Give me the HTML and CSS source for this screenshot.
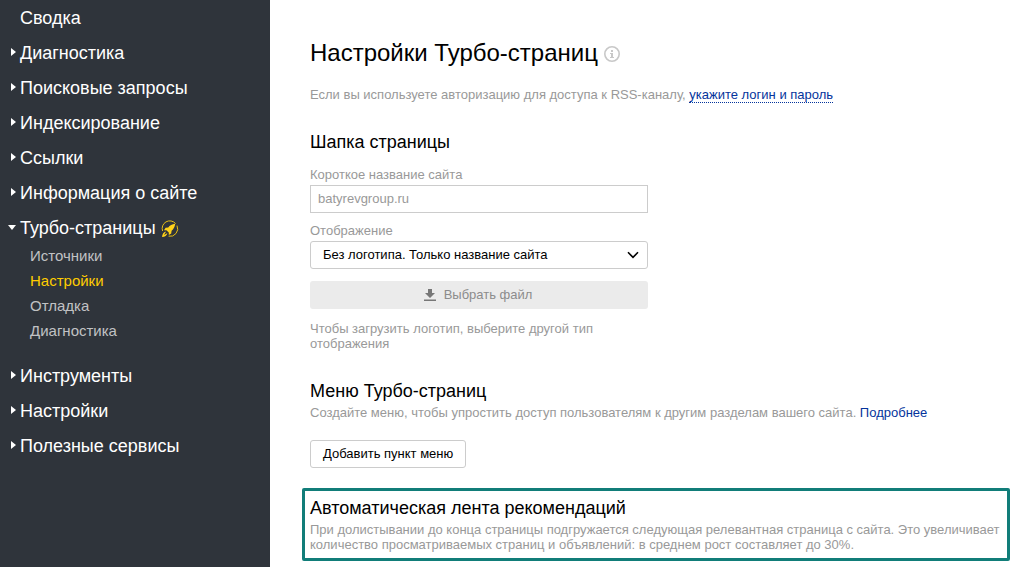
FILE: index.html
```
<!DOCTYPE html>
<html lang="ru">
<head>
<meta charset="utf-8">
<meta name="viewport" content="width=device-width, initial-scale=1">
<title>Настройки Турбо-страниц</title>
<link rel="stylesheet" href="styles.css">
</head>
<body>
<div class="layout">
  <nav class="sidebar" aria-label="Разделы">
    <ul class="menu">
      <li><a class="menu-item" href="#"><span class="marker"></span>Сводка</a></li>
      <li><a class="menu-item" href="#"><span class="marker marker-closed"></span>Диагностика</a></li>
      <li><a class="menu-item" href="#"><span class="marker marker-closed"></span>Поисковые запросы</a></li>
      <li><a class="menu-item" href="#"><span class="marker marker-closed"></span>Индексирование</a></li>
      <li><a class="menu-item" href="#"><span class="marker marker-closed"></span>Ссылки</a></li>
      <li><a class="menu-item" href="#"><span class="marker marker-closed"></span>Информация о сайте</a></li>
      <li>
        <a class="menu-item" href="#"><span class="marker marker-open"></span>Турбо-страницы
          <svg class="rocket" viewBox="0 0 18 18" aria-hidden="true">
            <path d="M1.6 11A7.6 7.6 0 0 1 14.6 3.6M16 5.6A7.6 7.6 0 0 1 7.6 16.2" fill="none" stroke="#e6be14" stroke-width="1"/>
            <path d="M14.2 3.8C11 4.2 8.8 5.4 7.2 7.4L4.6 7.8L3 10.2L5.4 10.2L7.8 12.6L7.8 15L10.2 13.4L10.6 10.8C12.6 9.2 13.8 7 14.2 3.8Z" fill="#ffd21a"/>
            <path d="M4.6 11.6C2.6 12.2 1.4 14 1 17C4 16.6 5.8 15.4 6.4 13.4L5.6 13.4L3.6 14.8L3.2 14.4L4.6 12.4Z" fill="#ffd21a"/>
          </svg>
        </a>
        <ul class="submenu">
          <li><a class="submenu-item" href="#">Источники</a></li>
          <li><a class="submenu-item submenu-item-current" href="#" aria-current="page">Настройки</a></li>
          <li><a class="submenu-item" href="#">Отладка</a></li>
          <li><a class="submenu-item" href="#">Диагностика</a></li>
        </ul>
      </li>
      <li><a class="menu-item" href="#"><span class="marker marker-closed"></span>Инструменты</a></li>
      <li><a class="menu-item" href="#"><span class="marker marker-closed"></span>Настройки</a></li>
      <li><a class="menu-item" href="#"><span class="marker marker-closed"></span>Полезные сервисы</a></li>
    </ul>
  </nav>

  <main class="content">
    <header class="page-head">
      <h1 class="title">Настройки Турбо-страниц</h1>
      <svg class="info" viewBox="0 0 16 16" aria-hidden="true">
        <circle cx="8" cy="8" r="7.2" fill="none" stroke="#c8c8c8" stroke-width="1.6"/>
        <path d="M7 4h2v2H7zM6 7h3v4h1v1H6v-1h1V8H6z" fill="#c8c8c8"/>
      </svg>
    </header>
    <p class="text intro">Если вы используете авторизацию для доступа к RSS-каналу, <a class="link link-dotted" href="#">укажите логин и пароль</a></p>

    <section class="section">
      <h2 class="subtitle">Шапка страницы</h2>
      <form class="form">
        <div class="field">
          <label class="text" for="site-name">Короткое название сайта</label>
          <input class="control input" id="site-name" type="text" value="batyrevgroup.ru">
        </div>
        <div class="field">
          <label class="text" for="display">Отображение</label>
          <div class="select-wrap">
            <select class="control select" id="display">
              <option>Без логотипа. Только название сайта</option>
            </select>
            <svg class="chevron" viewBox="0 0 12 8" aria-hidden="true"><path d="M1 1.3L6 6.3L11 1.3" fill="none" stroke="#000" stroke-width="1.6"/></svg>
          </div>
        </div>
        <button class="file-button" type="button" disabled>
          <svg class="download" viewBox="0 0 12 12" aria-hidden="true"><path d="M4 0h4v4h3L6 9L1 4h3zM0 10.5h12V12H0z" fill="#777"/></svg>
          Выбрать файл
        </button>
        <p class="text hint">Чтобы загрузить логотип, выберите другой тип отображения</p>
      </form>
    </section>

    <section class="section">
      <h2 class="subtitle">Меню Турбо-страниц</h2>
      <p class="text section-text">Создайте меню, чтобы упростить доступ пользователям к другим разделам вашего сайта. <a class="link" href="#">Подробнее</a></p>
      <button class="control add-button" type="button">Добавить пункт меню</button>
    </section>

    <section class="highlight">
      <h2 class="subtitle">Автоматическая лента рекомендаций</h2>
      <p class="text section-text">При долистывании до конца страницы подгружается следующая релевантная страница с сайта. Это увеличивает количество просматриваемых страниц и объявлений: в среднем рост составляет до 30%.</p>
    </section>
  </main>
</div>
</body>
</html>
```
FILE: styles.css
```
* {
  box-sizing: border-box;
}

body {
  margin: 0;
  background: #fff;
  color: #000;
  font-family: "Liberation Sans", Arial, sans-serif;
  font-size: 13px;
  line-height: 15px;
}

h1, h2, p, ul {
  margin: 0;
  padding: 0;
  font-weight: normal;
}

ul {
  list-style: none;
}

.layout {
  display: flex;
  min-height: 100vh;
}

.sidebar {
  flex: 0 0 270px;
  background: #2f343b;
}

.menu-item {
  display: flex;
  align-items: center;
  padding: 5px 8px 3px;
  color: #fff;
  font-size: 18px;
  line-height: 27px;
  text-decoration: none;
}

.marker {
  display: flex;
  width: 12px;
  padding-bottom: 3px;
}

.marker::before {
  border: 4px solid transparent;
}

.marker-closed::before {
  content: "";
  margin-left: 3px;
  border-left-color: #fff;
  border-left-width: 5px;
  border-right-width: 0;
}

.marker-open::before {
  content: "";
  border-top-color: #fff;
  border-top-width: 5px;
  border-bottom-width: 0;
}

.rocket {
  width: 18px;
  height: 18px;
  margin-left: 5px;
}

.submenu {
  margin: -2px 0 15px;
}

.submenu-item {
  display: block;
  padding-left: 30px;
  color: #c1c2c4;
  font-size: 15px;
  line-height: 25px;
  text-decoration: none;
}

.submenu-item-current {
  color: #ffcc00;
}

.content {
  flex: 1;
  min-width: 0;
  padding: 39px 9px 6px 40px;
}

.page-head {
  display: flex;
  align-items: center;
  gap: 6px;
}

.title {
  font-size: 24px;
  line-height: 28px;
}

.info {
  width: 16px;
  height: 16px;
  margin-top: 2px;
}

.text {
  color: #999;
}

.intro {
  margin-top: 20px;
}

.link {
  color: #04349c;
  text-decoration: none;
}

.link-dotted {
  border-bottom: 1px dotted #04349c;
}

.section {
  margin-top: 29px;
}

.subtitle {
  font-size: 18px;
  line-height: 22px;
}

.section-text {
  margin-top: 3px;
}

.form {
  max-width: 338px;
  margin-top: 14px;
}

.field {
  display: flex;
  flex-direction: column;
  gap: 3px;
  margin-bottom: 10px;
}

.control {
  height: 28px;
  border: 1px solid #ccc;
  background: #fff;
  color: #000;
  font: inherit;
}

.input {
  width: 100%;
  padding: 0 7px 2px;
  color: #999;
}

.select-wrap {
  display: grid;
  align-items: center;
}

.select {
  grid-area: 1 / 1;
  width: 100%;
  padding: 0 32px 2px 12px;
  border-radius: 3px;
  appearance: none;
}

.chevron {
  grid-area: 1 / 1;
  justify-self: end;
  width: 12px;
  height: 8px;
  margin-right: 9px;
  pointer-events: none;
}

.file-button {
  display: flex;
  align-items: center;
  justify-content: center;
  gap: 8px;
  width: 100%;
  height: 28px;
  margin: 12px 0;
  padding: 0 8px 2px 6px;
  border: 0;
  border-radius: 3px;
  background: #ebebeb;
  color: #8c8c8c;
  font: inherit;
}

.download {
  width: 12px;
  height: 12px;
  margin-top: 1px;
}

.add-button {
  margin-top: 20px;
  padding: 0 12px 2px;
  border-radius: 3px;
}

.highlight {
  margin: 20px 0 0 -8px;
  padding: 6px 5px;
  border: 3px solid #117d79;
  border-radius: 2px;
}
```
